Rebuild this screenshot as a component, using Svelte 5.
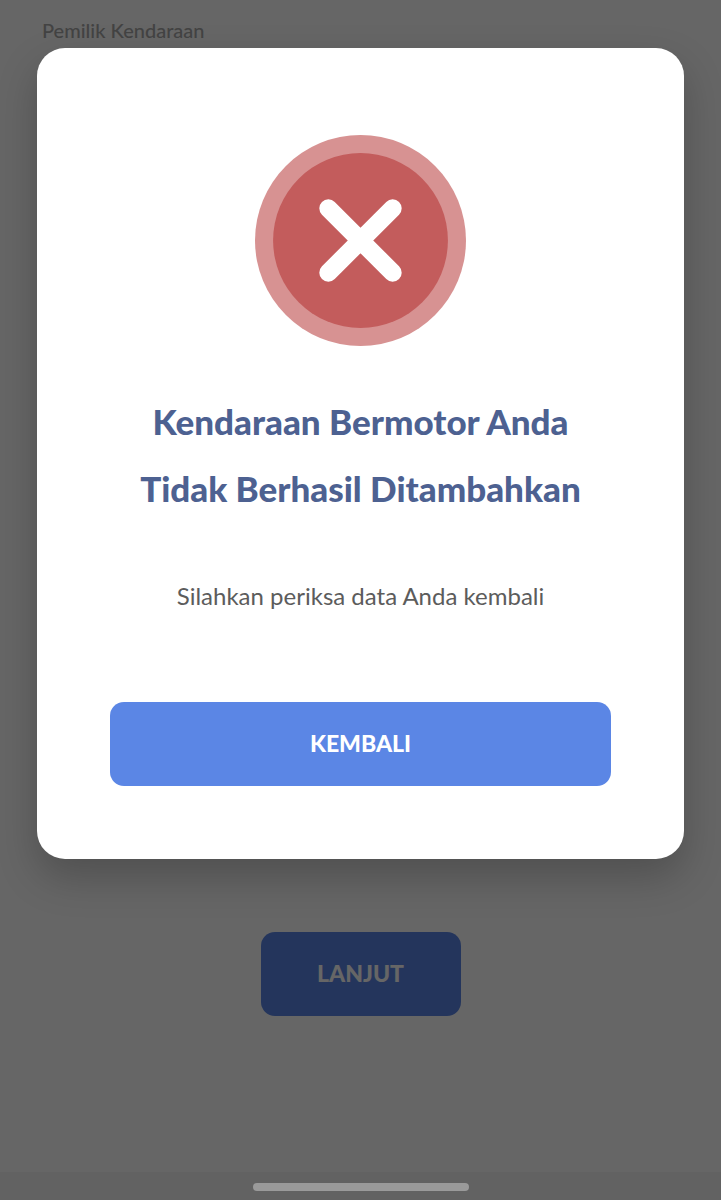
<script>
  let open = $state(true);
</script>

<div class="screen">
  <main class="page" inert={open}>
    <p class="label">Pemilik Kendaraan</p>
    <button class="btn next" type="button">LANJUT</button>
  </main>

  {#if open}
    <div class="overlay">
      <div class="dialog" role="alertdialog" aria-modal="true" aria-labelledby="title" aria-describedby="message">
        <svg class="icon" viewBox="0 0 210 210" aria-hidden="true">
          <circle cx="105" cy="105" r="105" fill="#d79292" />
          <circle cx="105" cy="105" r="87" fill="#c35c5c" />
          <path d="M73 73 137 137M137 73 73 137" fill="none" stroke="#fff" stroke-width="18" stroke-linecap="round" />
        </svg>
        <h1 id="title">Kendaraan Bermotor Anda<br />Tidak Berhasil Ditambahkan</h1>
        <p id="message">Silahkan periksa data Anda kembali</p>
        <button class="btn" type="button" onclick={() => (open = false)}>KEMBALI</button>
      </div>
    </div>
  {/if}

  <div class="system"><span class="handle"></span></div>
</div>

<style>
  :global(body) {
    margin: 0;
    background: #fff;
  }

  .screen {
    display: grid;
    grid-template: minmax(0, 1fr) 28px / minmax(0, 1fr);
    min-height: 100vh;
    font-family: Avenir, Lato, sans-serif;
  }

  .page {
    grid-area: 1 / 1;
    display: flex;
    flex-direction: column;
    justify-content: space-between;
    padding: 18px 42px 156px;
  }

  .label {
    margin: 0;
    font-size: 20px;
    line-height: 24px;
    font-weight: 500;
    color: #a8a8a8;
  }

  .btn {
    width: 100%;
    height: 84px;
    padding: 0 0 2px;
    border: 0;
    border-radius: 14px;
    background: #5b86e5;
    color: #fff;
    font: 900 23px/28px Avenir, Lato, sans-serif;
    cursor: pointer;
  }

  .next {
    align-self: center;
    width: 200px;
  }

  .overlay {
    grid-area: 1 / 1 / 3 / 2;
    display: flex;
    flex-direction: column;
    padding: 48px 37px;
    background: rgba(0, 0, 0, 0.6);
  }

  .dialog {
    display: flex;
    flex-direction: column;
    align-items: center;
    padding: 87px 73px 73px;
    border-radius: 28px;
    background: #fff;
    box-shadow: 0 18px 40px rgba(0, 0, 0, 0.22);
    text-align: center;
  }

  .icon {
    width: 211px;
    height: 211px;
  }

  h1 {
    margin: 42px 0 0;
    font-size: 35px;
    line-height: 67px;
    font-weight: 900;
    color: #4d6191;
    white-space: nowrap;
  }

  #message {
    margin: 58px 0 90px;
    font-size: 24px;
    line-height: 32px;
    color: #5c5c5c;
  }

  .system {
    grid-area: 2 / 1;
    z-index: 1;
    display: flex;
    justify-content: center;
    align-items: center;
    padding-top: 2px;
    background: rgba(0, 0, 0, 0.04);
  }

  .handle {
    width: 216px;
    height: 8px;
    border-radius: 4px;
    background: #9a9a9a;
  }
</style>
